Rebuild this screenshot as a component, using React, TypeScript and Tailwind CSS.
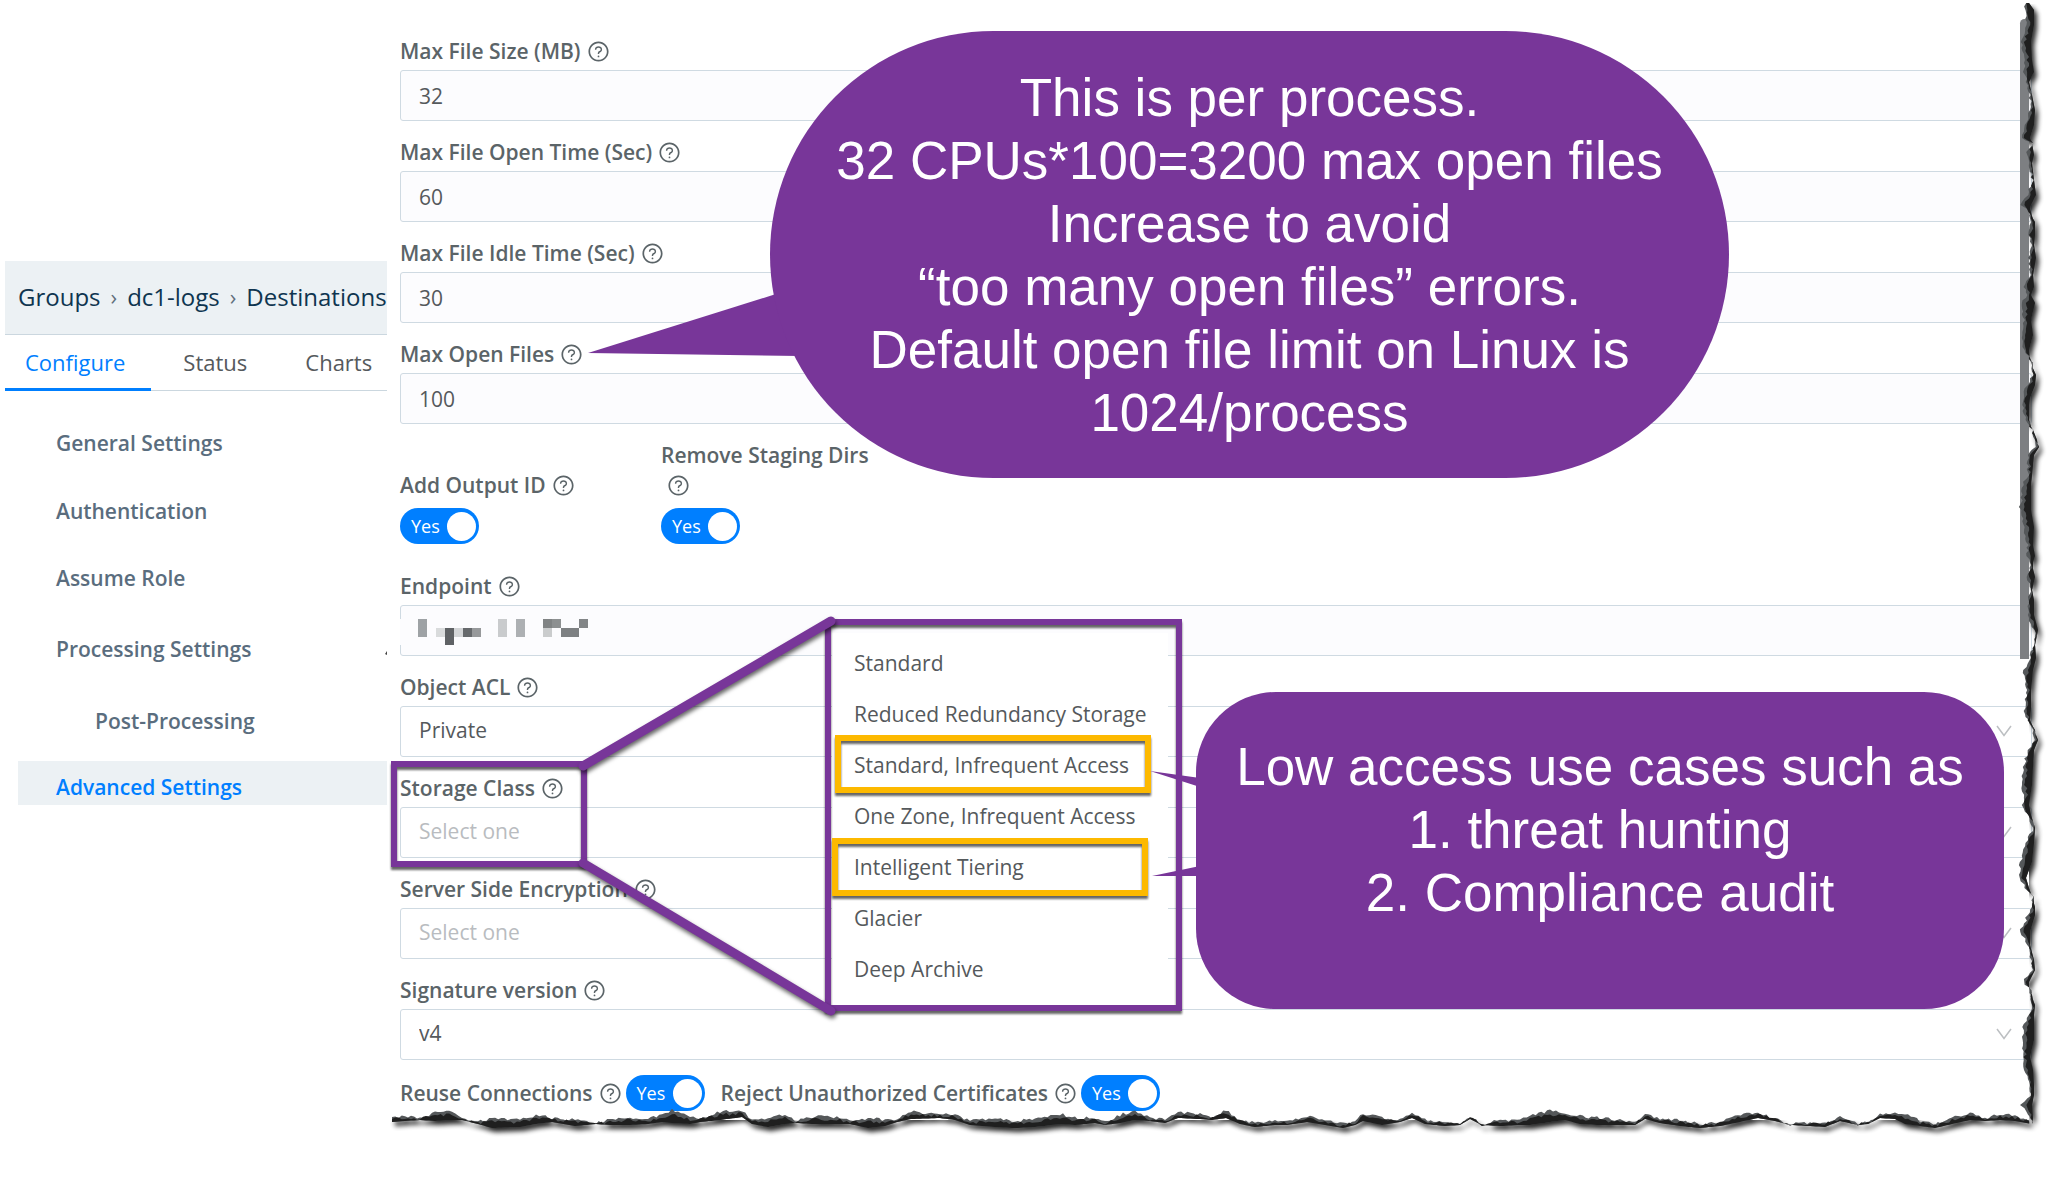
import { useId, useState } from "react";
import type { ReactNode } from "react";
import { AiOutlineQuestionCircle } from "react-icons/ai";

const CRUMBS = ["Groups", "dc1-logs", "Destinations"];
const TABS = ["Configure", "Status", "Charts"];

const NAV = [
  { label: "General Settings", className: "h-[68px] pl-[38px]" },
  { label: "Authentication", className: "h-[68px] pl-[38px]" },
  { label: "Assume Role", className: "h-[66px] pl-[38px]" },
  { label: "Processing Settings", className: "h-[76px] pl-[38px]" },
  { label: "Post-Processing", className: "h-[68px] pl-[77px]" },
];

const STORAGE_CLASSES = [
  "Standard",
  "Reduced Redundancy Storage",
  "Standard, Infrequent Access",
  "One Zone, Infrequent Access",
  "Intelligent Tiering",
  "Glacier",
  "Deep Archive",
];

// x, y, width, height, fill
const MOSAIC: [number, number, number, number, string][] = [
  [18, 14, 9, 18, "#9ea2a5"],
  [36, 23, 9, 9, "#d9dbdc"],
  [45, 23, 9, 17, "#5f6265"],
  [54, 23, 9, 9, "#d3d5d7"],
  [63, 23, 9, 9, "#66696c"],
  [72, 23, 9, 9, "#97999b"],
  [98, 14, 9, 18, "#c9cbcd"],
  [116, 14, 9, 18, "#adb0b3"],
  [143, 14, 9, 9, "#808384"],
  [152, 14, 9, 9, "#8d9091"],
  [143, 23, 9, 9, "#cacccd"],
  [161, 23, 18, 9, "#7d8082"],
  [179, 14, 9, 9, "#828587"],
];

// Torn paper edges: position along the edge, inner side, outer side
const RIGHT_EDGE: number[][] = [
  [3, 2026, 2031], [10, 2024, 2036], [25, 2027, 2036], [42, 2021, 2033], [60, 2026, 2034],
  [72, 2024, 2036], [82, 2027, 2031], [95, 2030, 2034], [110, 2031, 2037], [125, 2024, 2036],
  [138, 2021, 2032], [143, 2032, 2034], [155, 2026, 2036], [163, 2029, 2034], [180, 2032, 2036],
  [195, 2028, 2038], [205, 2020, 2033], [212, 2030, 2031], [222, 2032, 2037], [235, 2028, 2037],
  [245, 2033, 2036], [258, 2029, 2038], [275, 2031, 2035], [287, 2024, 2036], [295, 2028, 2033],
  [303, 2022, 2037], [320, 2024, 2033], [335, 2021, 2035], [350, 2024, 2031], [362, 2031, 2032],
  [375, 2033, 2038], [385, 2027, 2037], [398, 2023, 2032], [405, 2022, 2031], [420, 2026, 2031],
  [430, 2032, 2034], [440, 2036, 2038], [447, 2035, 2041], [455, 2028, 2036], [475, 2028, 2034],
  [485, 2023, 2033], [510, 2020, 2033], [527, 2024, 2036], [545, 2028, 2035], [556, 2026, 2037],
  [565, 2032, 2034], [577, 2026, 2037], [590, 2031, 2034], [600, 2028, 2036], [615, 2028, 2036],
  [630, 2034, 2040], [645, 2034, 2037], [658, 2030, 2038], [670, 2024, 2035], [690, 2027, 2033],
  [708, 2024, 2033], [720, 2028, 2032], [730, 2034, 2036], [740, 2034, 2040], [750, 2028, 2036],
  [767, 2023, 2035], [785, 2022, 2034], [798, 2025, 2032], [805, 2022, 2031], [815, 2028, 2033],
  [828, 2034, 2037], [843, 2026, 2036], [862, 2020, 2034], [878, 2020, 2028], [888, 2025, 2031],
  [897, 2033, 2034], [907, 2032, 2037], [915, 2028, 2037], [932, 2020, 2032], [945, 2028, 2032],
  [960, 2031, 2036], [970, 2033, 2037], [982, 2023, 2031], [990, 2030, 2031], [1005, 2033, 2037],
  [1015, 2029, 2036], [1027, 2023, 2036], [1040, 2023, 2036], [1057, 2022, 2032], [1070, 2024, 2035],
  [1085, 2029, 2036], [1095, 2031, 2036], [1105, 2021, 2034], [1118, 2031, 2035], [1126, 2032, 2034],
];

const BOTTOM_EDGE: number[][] = [
  [392, 1118, 1124], [405, 1116, 1123], [420, 1118, 1122], [435, 1113, 1123], [452, 1111, 1122],
  [462, 1118, 1122], [478, 1122, 1126], [492, 1118, 1130], [520, 1120, 1129], [536, 1115, 1126],
  [552, 1118, 1124], [575, 1120, 1128], [596, 1123, 1126], [610, 1120, 1127], [630, 1117, 1127],
  [648, 1119, 1126], [662, 1115, 1124], [672, 1110, 1125], [690, 1117, 1126], [700, 1118, 1124],
  [720, 1112, 1122], [742, 1111, 1119], [752, 1120, 1126], [768, 1118, 1129], [785, 1115, 1126],
  [795, 1121, 1125], [815, 1116, 1126], [840, 1118, 1126], [850, 1121, 1126], [868, 1118, 1130],
  [885, 1120, 1128], [897, 1119, 1124], [911, 1112, 1121], [940, 1114, 1120], [955, 1115, 1122],
  [970, 1121, 1127], [995, 1119, 1129], [1015, 1122, 1130], [1035, 1118, 1129], [1060, 1114, 1126],
  [1075, 1118, 1127], [1095, 1118, 1125], [1105, 1122, 1127], [1120, 1115, 1125], [1135, 1111, 1122],
  [1150, 1118, 1123], [1165, 1120, 1125], [1178, 1112, 1120], [1200, 1114, 1121], [1212, 1117, 1122],
  [1226, 1110, 1120], [1240, 1120, 1126], [1255, 1123, 1129], [1275, 1121, 1127], [1287, 1122, 1127],
  [1307, 1116, 1124], [1325, 1121, 1127], [1343, 1124, 1130], [1355, 1121, 1127], [1363, 1114, 1123],
  [1382, 1118, 1127], [1400, 1119, 1124], [1412, 1112, 1120], [1425, 1120, 1126], [1445, 1122, 1128],
  [1460, 1124, 1127], [1470, 1116, 1121], [1482, 1125, 1127], [1500, 1120, 1128], [1520, 1121, 1127],
  [1530, 1115, 1127], [1550, 1111, 1124], [1565, 1113, 1122], [1580, 1116, 1126], [1600, 1118, 1127],
  [1620, 1120, 1127], [1635, 1122, 1127], [1645, 1115, 1121], [1660, 1119, 1125], [1680, 1120, 1128],
  [1700, 1124, 1130], [1720, 1122, 1128], [1735, 1115, 1125], [1758, 1112, 1120], [1775, 1119, 1123],
  [1790, 1124, 1127], [1810, 1123, 1128], [1825, 1123, 1129], [1840, 1117, 1123], [1858, 1124, 1127],
  [1868, 1122, 1126], [1880, 1115, 1120], [1895, 1113, 1121], [1905, 1114, 1126], [1920, 1121, 1128],
  [1935, 1124, 1130], [1952, 1118, 1126], [1970, 1113, 1122], [1985, 1119, 1123], [2000, 1114, 1122],
  [2015, 1116, 1123], [2032, 1120, 1126],
];

// Cheap repeatable noise so the tear looks the same on every render
function jag(n: number) {
  const v = Math.sin(n * 12.9898) * 43758.5453;
  return (v - Math.floor(v)) * 2 - 1;
}

// inset moves the inner side outwards, in shares of the strip's thickness
function tornPath(edge: number[][], vertical: boolean, inset: number) {
  const inner: string[] = [];
  const outer: string[] = [];
  const point = (along: number, across: number) =>
    vertical ? `${across.toFixed(1)} ${along.toFixed(1)}` : `${along.toFixed(1)} ${across.toFixed(1)}`;

  for (let i = 0; i < edge.length - 1; i++) {
    const [a, in0, out0] = edge[i];
    const [b, in1, out1] = edge[i + 1];
    const steps = Math.max(2, Math.round((b - a) / 3));
    for (let s = 0; s < steps; s++) {
      const t = s / steps;
      const along = a + (b - a) * t;
      const near = in0 + (in1 - in0) * t;
      const far = out0 + (out1 - out0) * t - 2;
      inner.push(point(along, near + Math.max(0, far - near) * inset + jag(along + inset) * 1.6));
      outer.unshift(point(along, Math.max(far, near + 1)));
    }
  }
  return `M${inner.join("L")}L${outer.join("L")}Z`;
}

const TEAR_FACETS = tornPath(RIGHT_EDGE, true, 0) + tornPath(BOTTOM_EDGE, false, 0);
const TEAR_CORE = tornPath(RIGHT_EDGE, true, 0.35) + tornPath(BOTTOM_EDGE, false, 0.35);

function HelpIcon() {
  return <AiOutlineQuestionCircle aria-hidden="true" className="ml-1.5 inline-block size-[23px] align-[-4px]" />;
}

const LABEL = "text-[21px] leading-[30px] font-semibold text-[#5b6468]";
const BOX = "block h-[51px] w-full rounded-[3px] border border-[#cfdae2] px-[18px] text-[21px] text-[#55595c] outline-none";

function Field({ label, children }: { label: string; children: (id: string) => ReactNode }) {
  const id = useId();
  return (
    <div className="mb-4">
      <label htmlFor={id} className={`${LABEL} mb-1 block`}>
        {label}
        <HelpIcon />
      </label>
      <div className="relative">{children(id)}</div>
    </div>
  );
}

function TextField({ label, value }: { label: string; value: string }) {
  return (
    <Field label={label}>
      {(id) => <input id={id} defaultValue={value} className={`${BOX} bg-[#fcfcfe]`} />}
    </Field>
  );
}

function SelectField({ label, value, options = [] }: { label: string; value?: string; options?: string[] }) {
  return (
    <Field label={label}>
      {(id) => (
        <>
          <select
            id={id}
            defaultValue={value ?? ""}
            className={`${BOX} appearance-none bg-white pb-px ${value ? "" : "text-[#b9bcc0]"}`}
          >
            {value ? <option>{value}</option> : <option value="">Select one</option>}
            {options.map((o) => (
              <option key={o}>{o}</option>
            ))}
          </select>
          <svg viewBox="0 0 16 12" className="pointer-events-none absolute top-[19px] right-5 h-3 w-4" fill="none">
            <path d="M1 1 8 10.500 15 1" stroke="#bcbfc2" strokeWidth="1.500" />
          </svg>
        </>
      )}
    </Field>
  );
}

function Toggle({ labelledBy }: { labelledBy: string }) {
  const [on, setOn] = useState(true);
  return (
    <button
      type="button"
      role="switch"
      aria-checked={on}
      aria-labelledby={labelledBy}
      onClick={() => setOn(!on)}
      className={`flex h-9 w-[79px] shrink-0 items-center justify-between rounded-full pr-[3px] pl-[11px] text-[18px] text-white ${
        on ? "bg-[#007fff]" : "flex-row-reverse bg-gray-400"
      }`}
    >
      <span>{on ? "Yes" : "No"}</span>
      <span className="size-[29px] rounded-full bg-white" />
    </button>
  );
}

function Sidebar() {
  return (
    <aside className="w-[387px] shrink-0 pt-[261px] pl-[5px]">
      <nav
        aria-label="Breadcrumb"
        className="flex h-[74px] items-center gap-[10px] border-b border-[#cbd7df] bg-[#ecf1f4] pb-0.5 pl-[13px] text-[24px] whitespace-nowrap text-[#0f3550]"
      >
        {CRUMBS.map((crumb, i) => (
          <span key={crumb} className="flex items-center gap-[10px]">
            {i > 0 && <span className="text-[22px] text-[#5f6f7c]">›</span>}
            <a href="#">{crumb}</a>
          </span>
        ))}
      </nav>
      <div role="tablist" className="flex h-14 gap-3 border-b border-[#cbd7df] text-[22px] text-[#55595c]">
        {TABS.map((tab, i) => (
          <button
            key={tab}
            role="tab"
            aria-selected={i === 0}
            className={`-mb-px border-b-[3px] pt-1.5 pr-[26px] pb-1 pl-5 ${
              i === 0 ? "border-[#007fff] text-[#007fff]" : "border-transparent"
            }`}
          >
            {tab}
          </button>
        ))}
      </div>
      <nav aria-label="Settings" className="ml-[13px] pt-[19px] text-[21px] font-semibold text-[#5a6d7e]">
        {NAV.map((item) => (
          <a key={item.label} href="#" className={`flex items-center ${item.className}`}>
            {item.label}
          </a>
        ))}
        <a href="#" className="mt-[5px] flex h-11 items-center bg-[#ecf1f4] pt-2.5 pl-[38px] text-[#007fff]">
          Advanced Settings
        </a>
      </nav>
    </aside>
  );
}

function SettingsForm() {
  return (
    <main className="min-w-0 flex-1 pt-9 pr-4 pl-[13px]">
      <TextField label="Max File Size (MB)" value="32" />
      <TextField label="Max File Open Time (Sec)" value="60" />
      <TextField label="Max File Idle Time (Sec)" value="30" />
      <TextField label="Max Open Files" value="100" />

      <div className="mb-[27px] flex items-end gap-[31px]">
        <div className="w-[230px]">
          <div id="add-output-id" className={`${LABEL} mb-2`}>
            Add Output ID
            <HelpIcon />
          </div>
          <Toggle labelledBy="add-output-id" />
        </div>
        <div className="w-[222px]">
          <div id="remove-staging" className={`${LABEL} mb-2`}>
            Remove Staging Dirs
            <HelpIcon />
          </div>
          <Toggle labelledBy="remove-staging" />
        </div>
      </div>

      <Field label="Endpoint">
        {(id) => (
          <>
            <input id={id} className={`${BOX} bg-[#fcfcfe]`} />
            <svg className="pointer-events-none absolute inset-0 h-[51px] w-[200px]" shapeRendering="crispEdges">
              <rect x="0" y="14" width="2" height="26" fill="#fcfcfe" />
              {MOSAIC.map(([x, y, w, h, fill]) => (
                <rect key={`${x}-${y}`} x={x} y={y} width={w} height={h} fill={fill} />
              ))}
            </svg>
          </>
        )}
      </Field>
      <SelectField label="Object ACL" value="Private" />
      <SelectField label="Storage Class" options={STORAGE_CLASSES} />
      <SelectField label="Server Side Encryption" />
      <SelectField label="Signature version" value="v4" />

      <div className="-mt-px flex items-center">
        <span id="reuse" className={LABEL}>
          Reuse Connections
          <HelpIcon />
        </span>
        <div className="mr-4 ml-1">
          <Toggle labelledBy="reuse" />
        </div>
        <span id="reject" className={LABEL}>
          Reject Unauthorized Certificates
          <HelpIcon />
        </span>
        <div className="ml-1">
          <Toggle labelledBy="reject" />
        </div>
      </div>
    </main>
  );
}

function TornEdges() {
  return (
    <svg width="2048" height="1181" className="pointer-events-none absolute top-0 left-0">
      <defs>
        <filter id="tear-shadow" x="0" y="0" width="2048" height="1181" filterUnits="userSpaceOnUse">
          <feGaussianBlur stdDeviation="2.500" />
        </filter>
        <clipPath id="outside-paper">
          <path d="M2029 0H2048V1181H380V1120H2029Z" />
        </clipPath>
      </defs>
      <g clipPath="url(#outside-paper)">
        <path d={TEAR_FACETS} transform="translate(3 4)" fill="#000" opacity="0.85" filter="url(#tear-shadow)" />
      </g>
      <path d={TEAR_FACETS} fill="#55585a" />
      <path d={TEAR_CORE} fill="#1f1f1f" />
      <path d="m385 654 2-3v4z" fill="#444" />
    </svg>
  );
}

function Annotations() {
  return (
    <>
      {/* expanded storage class list */}
      <div className="absolute top-[633px] left-[832px] h-[366px] w-[336px] bg-white" />
      <div className="absolute top-[761px] left-[391px] h-[106px] w-[196px] border-[6px] border-[#783699] drop-shadow-[0_3px_1px_rgba(0,0,0,0.6)]" />
      <div className="absolute top-[619px] left-[825px] h-[392px] w-[357px] border-[6px] border-[#783699] drop-shadow-[0_3px_1px_rgba(0,0,0,0.6)]" />
      <ul className="absolute top-[638px] left-[854px] text-[21px] leading-[51px] whitespace-nowrap text-[#55595c]">
        {STORAGE_CLASSES.map((name) => (
          <li key={name}>{name}</li>
        ))}
      </ul>
      <div className="absolute top-[735px] left-[835px] h-[58px] w-[316px] border-[6px] border-[#fdb900] drop-shadow-[0_3px_1px_rgba(0,0,0,0.6)]" />
      <div className="absolute top-[838px] left-[832px] h-[58px] w-[316px] border-[6px] border-[#fdb900] drop-shadow-[0_3px_1px_rgba(0,0,0,0.6)]" />

      {/* connector lines and callout tails */}
      <svg width="2048" height="1181" className="pointer-events-none absolute top-0 left-0">
        <g stroke="#783699" strokeWidth="9" strokeLinecap="round" className="drop-shadow-[1px_3px_2px_rgba(0,0,0,0.6)]">
          <path d="M583 766 831 621" />
          <path d="M583 863 831 1011" />
        </g>
        <g fill="#783699">
          <path d="M588 353 776 294 800 356Z" />
          <path d="M1150 771 1200 778 1200 787Z" />
          <path d="M1152 876 1200 866 1200 876Z" />
        </g>
      </svg>

      <div className="absolute top-[31px] left-[770px] flex h-[447px] w-[959px] items-center justify-center rounded-full bg-[#783699] text-center font-['Liberation_Sans',sans-serif] text-[53px] leading-[63px] text-white">
        <p>
          This is per process.
          <br />
          32 CPUs*100=3200 max open files
          <br />
          Increase to avoid
          <br />
          “too many open files” errors.
          <br />
          Default open file limit on Linux is
          <br />
          1024/process
        </p>
      </div>
      <div className="absolute top-[692px] left-[1196px] h-[317px] w-[808px] rounded-[80px] bg-[#783699] pt-[43px] text-center font-['Liberation_Sans',sans-serif] text-[53px] leading-[63px] text-white">
        <p>Low access use cases such as</p>
        <ol>
          <li>1. threat hunting</li>
          <li>2. Compliance audit</li>
        </ol>
      </div>
    </>
  );
}

export default function App() {
  return (
    <div className="relative min-h-screen overflow-hidden bg-white font-['Open_Sans',sans-serif]">
      <div className="flex">
        <Sidebar />
        <SettingsForm />
      </div>
      <div className="absolute top-[19px] right-[19px] h-[640px] w-[9px] rounded-t-full bg-[#7d7f82]" />
      <TornEdges />
      <Annotations />
    </div>
  );
}
